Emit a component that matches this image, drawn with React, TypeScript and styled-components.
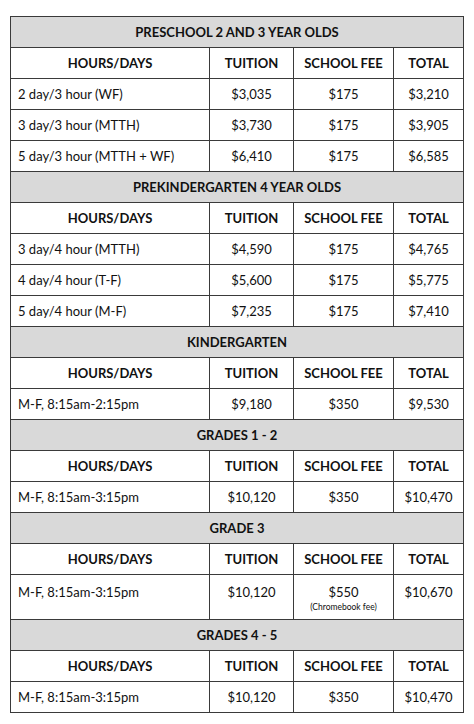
import { createGlobalStyle, styled } from "styled-components";

const GlobalStyle = createGlobalStyle`
  html, body {
    margin: 0;
    padding: 0;
    background: #fff;
  }
  body {
    font-family: Lato, "Open Sans", sans-serif;
    color: #111;
  }
`;

const Page = styled.div`
  padding: 16px 12px 12px 10px;
`;

const Table = styled.table`
  width: 453px;
  border-collapse: collapse;
  table-layout: fixed;
  border: 1px solid #3a3a3a;
  font-size: 13px;
`;

const SectionCell = styled.th`
  height: 31px;
  padding: 0;
  background: #d9d9d9;
  border: 1px solid #3a3a3a;
  font-weight: 700;
  text-align: center;
  vertical-align: middle;
  box-sizing: border-box;
`;

const HeadCell = styled.th`
  height: 31px;
  padding: 0;
  border: 1px solid #3a3a3a;
  font-weight: 700;
  text-align: center;
  vertical-align: middle;
  box-sizing: border-box;
`;

const Cell = styled.td<{ $left?: boolean; $top?: boolean }>`
  height: ${(p) => (p.$top ? "45px" : "31px")};
  padding: ${(p) => (p.$top ? "9px 0 0" : "0")};
  padding-left: ${(p) => (p.$left ? "7px" : "0")};
  border: 1px solid #3a3a3a;
  text-align: ${(p) => (p.$left ? "left" : "center")};
  vertical-align: ${(p) => (p.$top ? "top" : "middle")};
  white-space: nowrap;
  box-sizing: border-box;
`;

const Note = styled.div`
  font-size: 8.5px;
  margin-top: 1px;
  line-height: 12px;
`;

type Row = { label: string; tuition: string; fee: string; total: string; note?: string };
type Section = { title: string; rows: Row[] };

const sections: Section[] = [
  {
    title: "PRESCHOOL 2 AND 3 YEAR OLDS",
    rows: [
      { label: "2 day/3 hour (WF)", tuition: "$3,035", fee: "$175", total: "$3,210" },
      { label: "3 day/3 hour (MTTH)", tuition: "$3,730", fee: "$175", total: "$3,905" },
      { label: "5 day/3 hour (MTTH + WF)", tuition: "$6,410", fee: "$175", total: "$6,585" },
    ],
  },
  {
    title: "PREKINDERGARTEN 4 YEAR OLDS",
    rows: [
      { label: "3 day/4 hour (MTTH)", tuition: "$4,590", fee: "$175", total: "$4,765" },
      { label: "4 day/4 hour (T-F)", tuition: "$5,600", fee: "$175", total: "$5,775" },
      { label: "5 day/4 hour (M-F)", tuition: "$7,235", fee: "$175", total: "$7,410" },
    ],
  },
  {
    title: "KINDERGARTEN",
    rows: [{ label: "M-F, 8:15am-2:15pm", tuition: "$9,180", fee: "$350", total: "$9,530" }],
  },
  {
    title: "GRADES 1 - 2",
    rows: [{ label: "M-F, 8:15am-3:15pm", tuition: "$10,120", fee: "$350", total: "$10,470" }],
  },
  {
    title: "GRADE 3",
    rows: [
      {
        label: "M-F, 8:15am-3:15pm",
        tuition: "$10,120",
        fee: "$550",
        total: "$10,670",
        note: "(Chromebook fee)",
      },
    ],
  },
  {
    title: "GRADES 4 - 5",
    rows: [{ label: "M-F, 8:15am-3:15pm", tuition: "$10,120", fee: "$350", total: "$10,470" }],
  },
];

const App = () => {
  return (
    <Page>
      <GlobalStyle />
      <Table>
        <colgroup>
          <col style={{ width: 199 }} />
          <col style={{ width: 84 }} />
          <col style={{ width: 100 }} />
          <col style={{ width: 70 }} />
        </colgroup>
        <tbody>
          {sections.map((s) => [
            <tr key={s.title + "-t"}>
              <SectionCell colSpan={4}>{s.title}</SectionCell>
            </tr>,
            <tr key={s.title + "-h"}>
              <HeadCell>HOURS/DAYS</HeadCell>
              <HeadCell>TUITION</HeadCell>
              <HeadCell>SCHOOL FEE</HeadCell>
              <HeadCell>TOTAL</HeadCell>
            </tr>,
            ...s.rows.map((r) => (
              <tr key={s.title + r.label}>
                <Cell $left $top={!!r.note}>{r.label}</Cell>
                <Cell $top={!!r.note}>{r.tuition}</Cell>
                <Cell $top={!!r.note}>
                  {r.fee}
                  {r.note && <Note>{r.note}</Note>}
                </Cell>
                <Cell $top={!!r.note}>{r.total}</Cell>
              </tr>
            )),
          ])}
        </tbody>
      </Table>
    </Page>
  );
};

export default App;
